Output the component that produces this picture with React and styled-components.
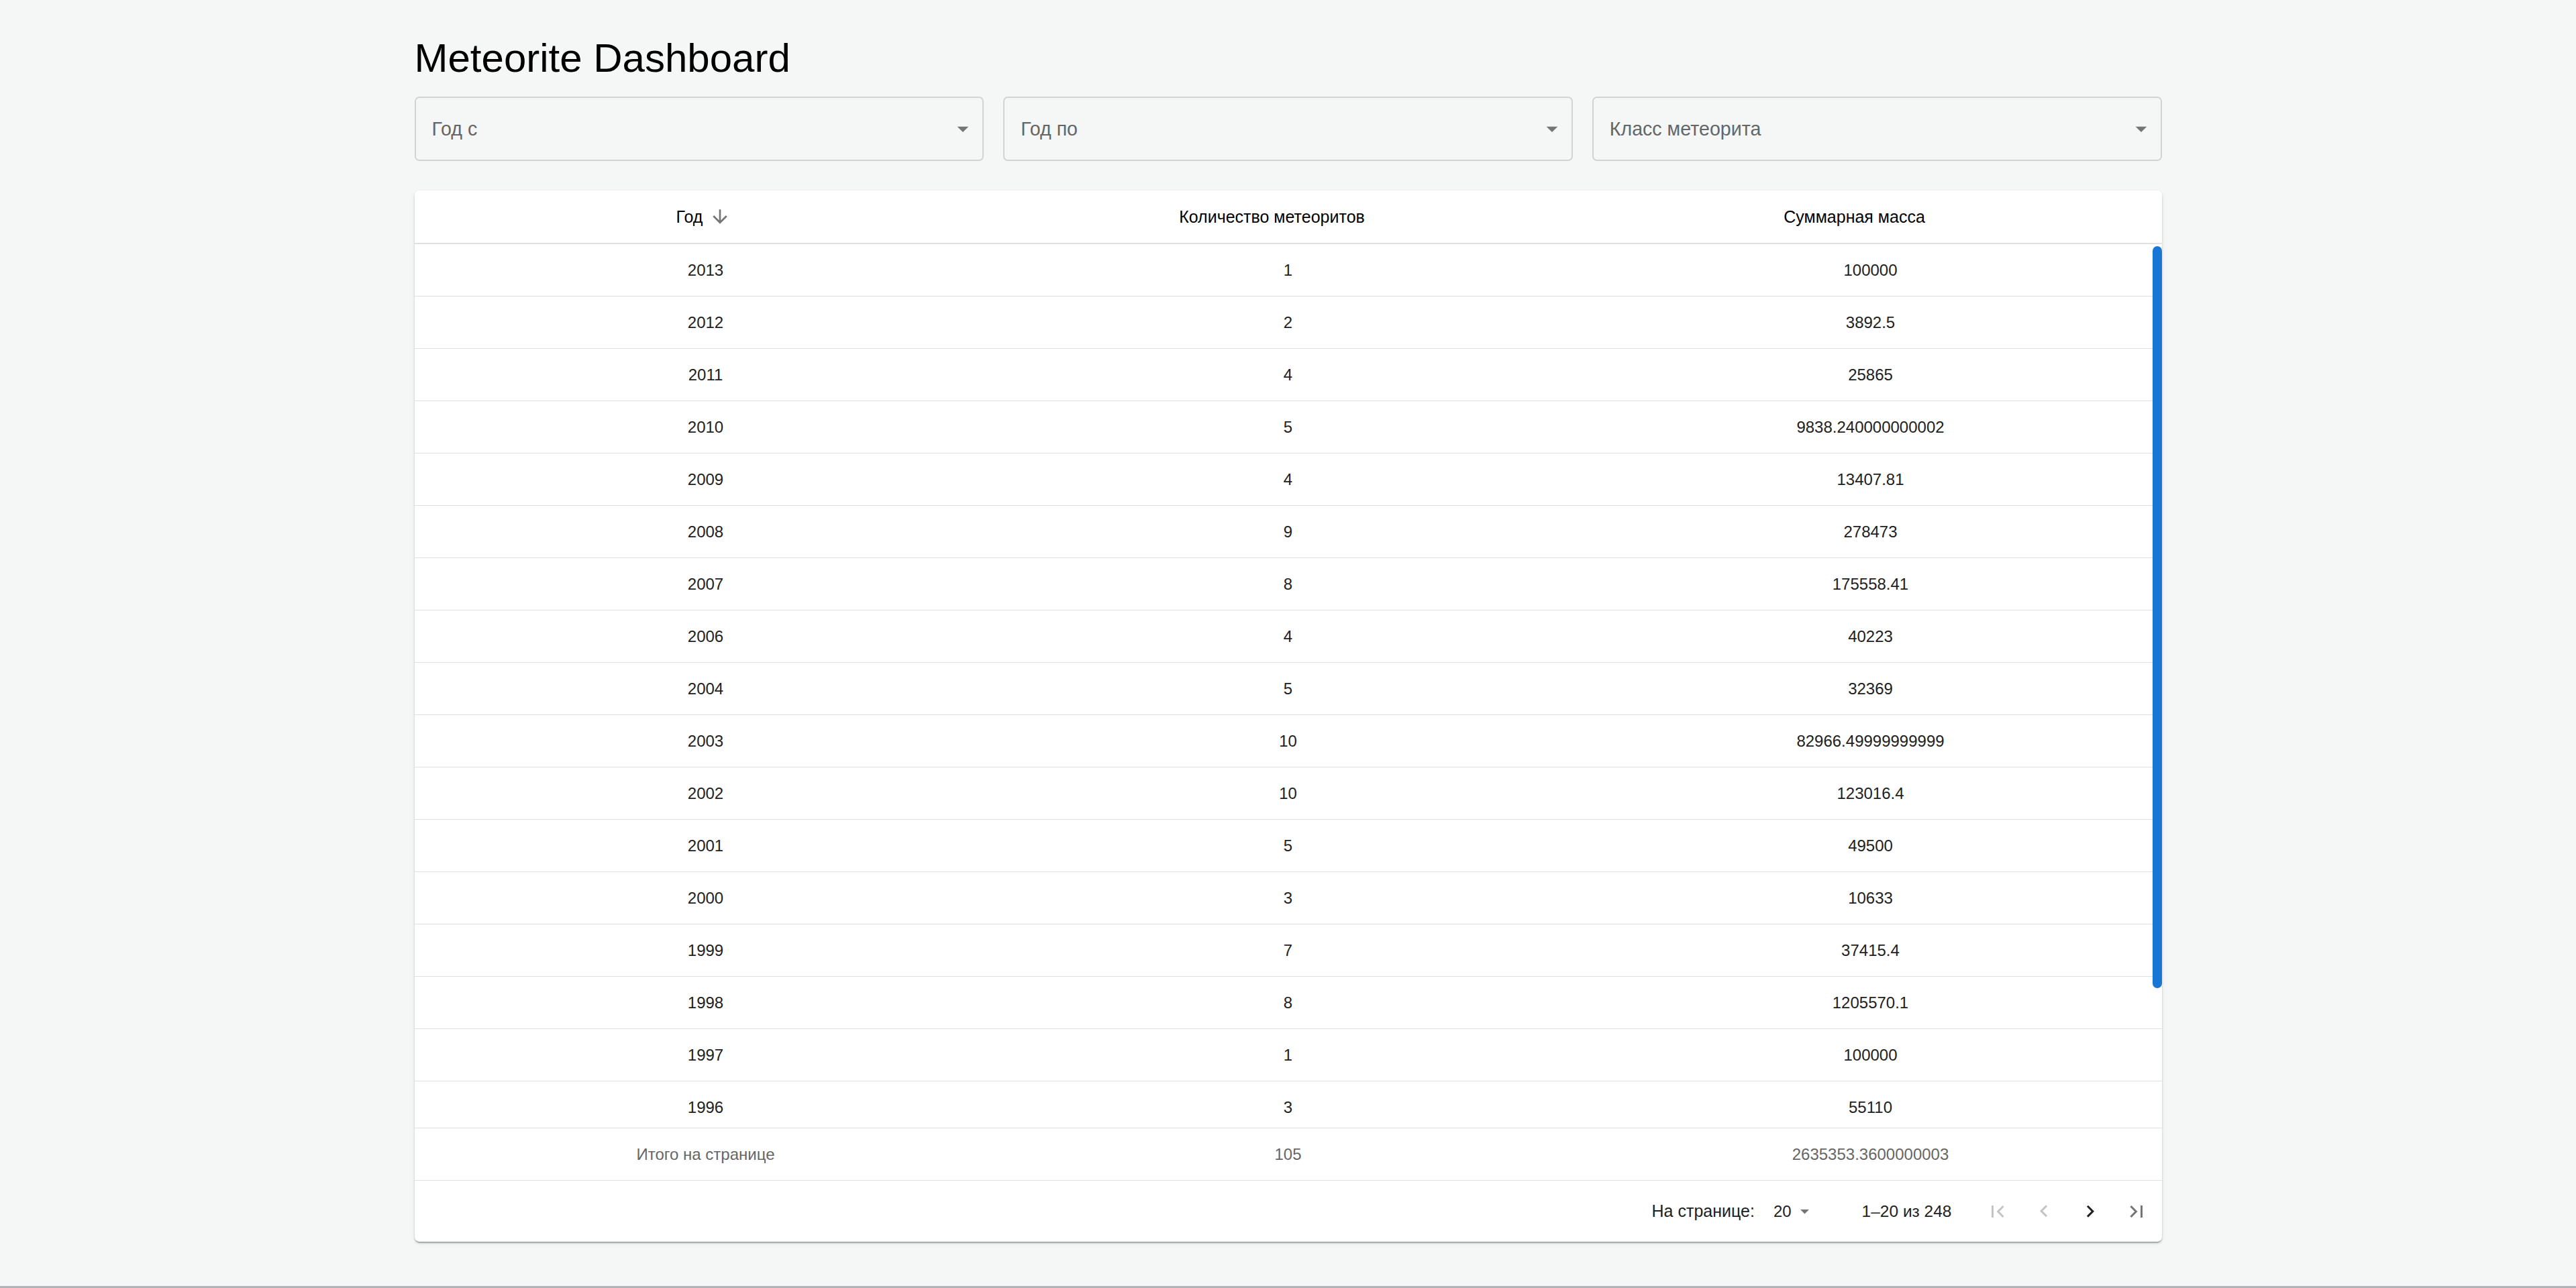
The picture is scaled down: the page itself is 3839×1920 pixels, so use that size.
import React from "react";
import styled, { createGlobalStyle } from "styled-components";

const ROW_H = 78;
const BODY_H = 1317;
const PAGE_SIZE = 20;

// rows of the first page that fit in the visible part of the grid
const rows = [
  ["2013", 1, "100000"],
  ["2012", 2, "3892.5"],
  ["2011", 4, "25865"],
  ["2010", 5, "9838.240000000002"],
  ["2009", 4, "13407.81"],
  ["2008", 9, "278473"],
  ["2007", 8, "175558.41"],
  ["2006", 4, "40223"],
  ["2004", 5, "32369"],
  ["2003", 10, "82966.49999999999"],
  ["2002", 10, "123016.4"],
  ["2001", 5, "49500"],
  ["2000", 3, "10633"],
  ["1999", 7, "37415.4"],
  ["1998", 8, "1205570.1"],
  ["1997", 1, "100000"],
  ["1996", 3, "55110"],
];

const totals = { count: 105, mass: "2635353.3600000003" };

const GlobalStyle = createGlobalStyle`
  body {
    margin: 0;
    background: #f5f7f7;
    font-family: "Liberation Sans", Arial, sans-serif;
  }
`;

const Page = styled.div`
  min-height: 1920px;
  box-sizing: border-box;
  border-bottom: 3px solid #b4b4b8;
`;

const Container = styled.div`
  max-width: 2604px;
  margin: 0 auto;
  padding-top: 53px;
`;

const Title = styled.h1`
  margin: 0;
  font-size: 60px;
  font-weight: 400;
  line-height: 67px;
  color: #000;
`;

const Filters = styled.div`
  display: grid;
  grid-template-columns: repeat(3, 1fr);
  gap: 29px;
  margin-top: 24px;
`;

const SelectBox = styled.div`
  height: 96px;
  box-sizing: border-box;
  display: flex;
  align-items: center;
  justify-content: space-between;
  padding: 0 9px 0 24px;
  border: 2px solid #d3d3d3;
  border-radius: 7px;
  color: #666;
  font-size: 28.6px;
`;

const Paper = styled.div`
  margin-top: 44px;
  background: #fff;
  border-radius: 7px;
  overflow: hidden;
  box-shadow: 0 3px 2px -2px rgba(0, 0, 0, 0.25), 0 2px 2px 0 rgba(0, 0, 0, 0.16),
    0 2px 5px 0 rgba(0, 0, 0, 0.12);
`;

const Row = styled.div`
  display: grid;
  grid-template-columns: repeat(3, 1fr);
  align-items: center;
  text-align: center;
  box-sizing: border-box;
  height: ${ROW_H}px;
  font-size: 24px;
`;

const HeaderRow = styled(Row)`
  height: 80px;
  border-bottom: 2px solid #e0e0e0;
  color: #000;
  font-size: 25px;
`;

const HeaderCell = styled.div`
  display: flex;
  align-items: center;
  justify-content: center;
  gap: 4px;
`;

const SortSlot = styled.span`
  width: 44px;
  display: flex;
  align-items: center;
  justify-content: center;
  visibility: ${(p) => (p.$active ? "visible" : "hidden")};
`;

const Body = styled.div`
  position: relative;
  height: ${BODY_H}px;
  overflow: hidden;
`;

const BodyRow = styled(Row)`
  border-bottom: 1px solid #e0e0e0;
  color: #212121;
`;

const Thumb = styled.div`
  position: absolute;
  right: 0;
  top: 3px;
  width: 14px;
  border-radius: 7px;
  background: #1976d2;
`;

const TotalsRow = styled(Row)`
  border-top: 1px solid #e0e0e0;
  color: #666;
`;

const Pager = styled.div`
  height: 92px;
  box-sizing: border-box;
  border-top: 1px solid #e0e0e0;
  display: flex;
  align-items: center;
  justify-content: flex-end;
  padding-right: 3px;
  font-size: 24px;
  color: #212121;
`;

const PagerLabel = styled.span`
  font-size: 25px;
`;

const PerPage = styled.div`
  display: flex;
  align-items: center;
  gap: 4px;
  margin-left: 28px;
`;

const Range = styled.span`
  margin-left: 70px;
  margin-right: 34px;
  font-size: 24.5px;
`;

const PageButton = styled.button`
  width: 69px;
  height: 69px;
  padding: 0;
  border: none;
  background: none;
  display: flex;
  align-items: center;
  justify-content: center;
  color: ${(p) => p.$tone};
`;

const Icon = ({ d, size, color }) => (
  <svg width={size} height={size} viewBox="0 0 24 24" fill={color || "currentColor"}>
    <path d={d} />
  </svg>
);

const DROP = "M7 10l5 5 5-5z";
const SORT_DOWN = "M20 12l-1.41-1.41L13 16.17V4h-2v12.17l-5.58-5.59L4 12l8 8 8-8z";
const FIRST = "M18.41 16.59L13.82 12l4.59-4.59L17 6l-6 6 6 6zM6 6h2v12H6z";
const PREV = "M15.41 16.09l-4.58-4.59 4.58-4.59L14 5.5l-6 6 6 6z";
const NEXT = "M8.59 16.34l4.58-4.59-4.58-4.59L10 5.75l6 6-6 6z";
const LAST = "M5.59 7.41L10.18 12l-4.59 4.59L7 18l6-6-6-6zM16 6h2v12h-2z";

const filters = ["Год с", "Год по", "Класс метеорита"];
const columns = [
  { title: "Год", sorted: true },
  { title: "Количество метеоритов" },
  { title: "Суммарная масса" },
];

const App = () => {
  const thumbH = Math.round((BODY_H * BODY_H) / (PAGE_SIZE * ROW_H)) - 6;

  return (
    <Page>
      <GlobalStyle />
      <Container>
        <Title>Meteorite Dashboard</Title>
        <Filters>
          {filters.map((f) => (
            <SelectBox key={f}>
              <span>{f}</span>
              <Icon d={DROP} size={40} color="#757575" />
            </SelectBox>
          ))}
        </Filters>
        <Paper>
          <HeaderRow>
            {columns.map((c) => (
              <HeaderCell key={c.title}>
                <span>{c.title}</span>
                <SortSlot $active={c.sorted}>
                  <Icon d={SORT_DOWN} size={32} color="#757575" />
                </SortSlot>
              </HeaderCell>
            ))}
          </HeaderRow>
          <Body>
            {rows.map((r) => (
              <BodyRow key={r[0]}>
                <div>{r[0]}</div>
                <div>{r[1]}</div>
                <div>{r[2]}</div>
              </BodyRow>
            ))}
            <Thumb style={{ height: thumbH }} />
          </Body>
          <TotalsRow>
            <div>Итого на странице</div>
            <div>{totals.count}</div>
            <div>{totals.mass}</div>
          </TotalsRow>
          <Pager>
            <PagerLabel>На странице:</PagerLabel>
            <PerPage>
              <span>20</span>
              <Icon d={DROP} size={31} color="#757575" />
            </PerPage>
            <Range>1–20 из 248</Range>
            <PageButton $tone="#c4c4c4">
              <Icon d={FIRST} size={36} />
            </PageButton>
            <PageButton $tone="#c4c4c4">
              <Icon d={PREV} size={36} />
            </PageButton>
            <PageButton $tone="#212121">
              <Icon d={NEXT} size={36} />
            </PageButton>
            <PageButton $tone="#757575">
              <Icon d={LAST} size={36} />
            </PageButton>
          </Pager>
        </Paper>
      </Container>
    </Page>
  );
};

export default App;
